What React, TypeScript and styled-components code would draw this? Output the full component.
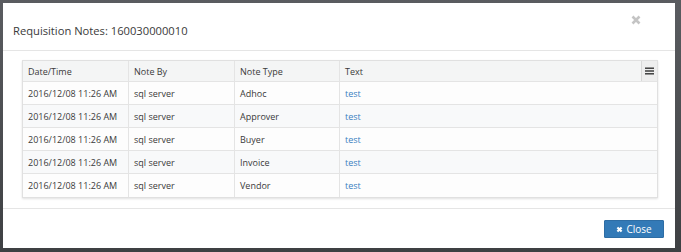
import React from "react";
import styled, { createGlobalStyle } from "styled-components";

const Global = createGlobalStyle`
  html, body { margin: 0; padding: 0; }
  body {
    background: #4b4d50;
    font-family: "Open Sans", "Liberation Sans", sans-serif;
    color: #333;
  }
`;

const Backdrop = styled.div`
  width: 681px;
  height: 252px;
  box-sizing: border-box;
  padding: 3px 6px 4px 3px;
  background: linear-gradient(#5a5c60, #3e4043);
`;

const Modal = styled.div`
  width: 100%;
  height: 100%;
  background: #fff;
  display: flex;
  flex-direction: column;
`;

const Header = styled.div`
  height: 48px;
  box-sizing: border-box;
  border-bottom: 1px solid #e5e5e5;
  display: flex;
  align-items: center;
  justify-content: space-between;
  padding: 0 34px 0 10px;
`;

const Title = styled.h4`
  margin: 8px 0 0 0;
  font-size: 11.2px;
  font-weight: 400;
  color: #3a3a3a;
`;

const CloseX = styled.span`
  line-height: 1;
  margin-top: -16px;
`;

const Body = styled.div`
  padding: 9px 17px 10px 19px;
  border-bottom: 1px solid #e5e5e5;
`;

const Grid = styled.div`
  border: 1px solid #e0e0e0;
  box-shadow: 0 1px 2px rgba(0, 0, 0, 0.12);
  font-size: 9px;
`;

const Row = styled.div<{ $bg: string; $h: number; $last?: boolean }>`
  display: grid;
  grid-template-columns: 105px 106px 105px 1fr;
  height: ${(p) => p.$h}px;
  background: ${(p) => p.$bg};
  border-bottom: ${(p) => (p.$last ? "none" : "1px solid #e4e4e4")};
  box-sizing: border-box;
`;

const Cell = styled.div<{ $first?: boolean }>`
  display: flex;
  align-items: center;
  justify-content: space-between;
  padding-left: 5px;
  border-left: ${(p) => (p.$first ? "none" : "1px solid #e4e4e4")};
  white-space: nowrap;
  color: #3a3a3a;
`;

const Link = styled.a`
  color: #3a7fc1;
  text-decoration: none;
`;

const MenuBtn = styled.div`
  width: 16px;
  height: 20px;
  box-sizing: border-box;
  border-left: 1px solid #d8d8d8;
  background: #eeeeee;
  display: flex;
  align-items: center;
  justify-content: center;
`;

const Footer = styled.div`
  flex: 1;
  display: flex;
  justify-content: flex-end;
  align-items: flex-start;
  padding: 11px 11px 0 0;
`;

const Button = styled.button`
  width: 60px;
  height: 18px;
  background: #337ab7;
  border: 1px solid #2e6da4;
  border-radius: 1px;
  color: #fff;
  font-family: "Open Sans", "Liberation Sans", sans-serif;
  font-size: 10px;
  display: flex;
  align-items: center;
  justify-content: center;
  gap: 3px;
  padding: 0;
`;

const rows = [
  ["Adhoc", "#fdfdfd"],
  ["Approver", "#f8f9fa"],
  ["Buyer", "#fdfdfd"],
  ["Invoice", "#f8f9fa"],
  ["Vendor", "#fdfdfd"],
];

export default function App() {
  return (
    <>
      <Global />
      <Backdrop>
        <Modal>
          <Header>
            <Title>Requisition Notes: 160030000010</Title>
            <CloseX>
              <svg width="10" height="10" viewBox="0 0 10 10">
                <path d="M1.5 1.5 L8.5 8.5 M8.5 1.5 L1.5 8.5" stroke="#c4c4c4" strokeWidth="2.6" strokeLinecap="butt" />
              </svg>
            </CloseX>
          </Header>
          <Body>
            <Grid>
              <Row $bg="#f4f5f5" $h={21}>
                <Cell $first>Date/Time</Cell>
                <Cell>Note By</Cell>
                <Cell>Note Type</Cell>
                <Cell>
                  Text
                  <MenuBtn>
                    <svg width="9" height="8" viewBox="0 0 9 8">
                      <rect x="0" y="0.5" width="9" height="1.4" fill="#333" />
                      <rect x="0" y="3.3" width="9" height="1.4" fill="#333" />
                      <rect x="0" y="6.1" width="9" height="1.4" fill="#333" />
                    </svg>
                  </MenuBtn>
                </Cell>
              </Row>
              {rows.map(([t, bg], i) => (
                <Row key={t} $bg={bg} $h={23} $last={i === rows.length - 1}>
                  <Cell $first>2016/12/08 11:26 AM</Cell>
                  <Cell>sql server</Cell>
                  <Cell>{t}</Cell>
                  <Cell>
                    <Link>test</Link>
                  </Cell>
                </Row>
              ))}
            </Grid>
          </Body>
          <Footer>
            <Button>
              <svg width="7" height="7" viewBox="0 0 10 10">
                <path d="M2 2 L8 8 M8 2 L2 8" stroke="#fff" strokeWidth="3" />
              </svg>
              Close
            </Button>
          </Footer>
        </Modal>
      </Backdrop>
    </>
  );
}
